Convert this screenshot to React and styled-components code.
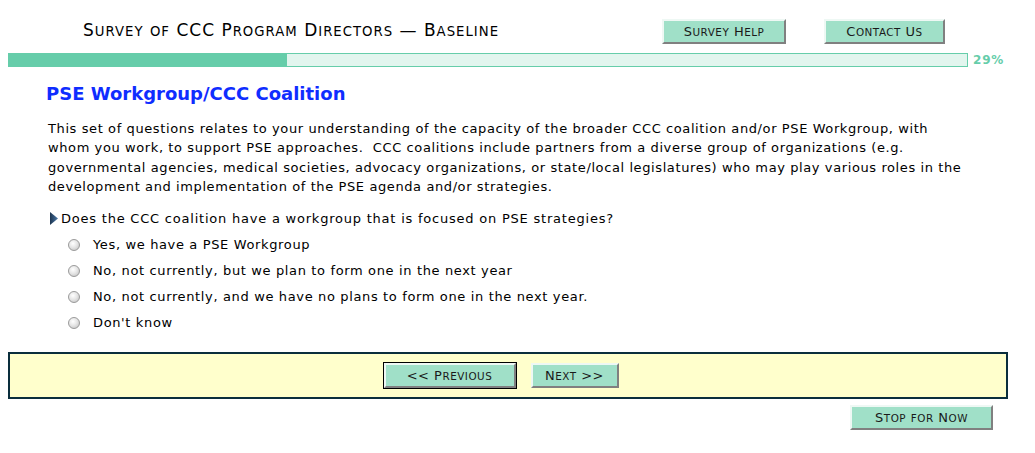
import React from "react";
import styled, { createGlobalStyle } from "styled-components";

const GlobalStyle = createGlobalStyle`
  body {
    margin: 8px;
    background: #fff;
    font-family: "DejaVu Sans", Verdana, sans-serif;
    color: #000;
  }
`;

const Page = styled.div`
  width: 1000px;
`;

const Header = styled.div`
  display: flex;
  align-items: center;
  height: 44px;
  padding-top: 1px;
  padding-left: 75px;
  padding-right: 63px;
`;

const Title = styled.h1`
  flex: 1;
  margin: -3px 0 0;
  font-size: 17px;
  font-weight: normal;
  letter-spacing: 1px;
  color: #000;
`;

const Lower = styled.span`
  font-size: ${(p) => p.$scale || 0.8}em;
  text-transform: uppercase;
`;

// fake the old-browser small caps: lowercase runs become smaller capitals
const SmallCaps = ({ text, scale }) =>
  text.split(/([a-z]+)/).map((part, i) =>
    /^[a-z]+$/.test(part) ? (
      <Lower key={i} $scale={scale}>
        {part}
      </Lower>
    ) : (
      <React.Fragment key={i}>{part}</React.Fragment>
    )
  );

const Button = styled.button`
  width: ${(p) => p.$w}px;
  height: 25px;
  padding: 0;
  margin-left: ${(p) => p.$gap || 0}px;
  background: #a0e0c8;
  font-family: "DejaVu Sans", Verdana, sans-serif;
  font-size: 13px;
  letter-spacing: 0.5px;
  color: #1a1a1a;
  border: 2px solid;
  border-color: #eef8f4 #808080 #808080 #eef8f4;
  outline: ${(p) => (p.$default ? "1px solid #000" : "none")};
  outline-offset: 0;
  cursor: pointer;
`;

const ProgressRow = styled.div`
  display: flex;
  align-items: center;
`;

const Track = styled.div`
  width: 958px;
  height: 12px;
  border: 1px solid #66cdaa;
  background: #e2f5ee;
`;

const Fill = styled.div`
  height: 100%;
  background: #66cdaa;
`;

const Percent = styled.span`
  margin-left: 5px;
  font-size: 12px;
  font-weight: bold;
  letter-spacing: 0.8px;
  color: #66cdaa;
`;

const Content = styled.div`
  padding-left: 38px;
`;

const Heading = styled.h2`
  margin: 16px 0 0;
  font-size: 18px;
  font-weight: bold;
  color: #0f2dff;
`;

const Intro = styled.p`
  margin: 15px 0 0 2px;
  width: 920px;
  font-size: 13px;
  letter-spacing: 0.6px;
  line-height: 19.3px;
`;

const Question = styled.div`
  display: flex;
  align-items: center;
  margin: 15px 0 0 4px;
  font-size: 13px;
  letter-spacing: 0.78px;
`;

const Arrow = styled.svg`
  width: 8px;
  height: 13px;
  margin-right: 3px;
`;

const Options = styled.div`
  display: flex;
  flex-direction: column;
  gap: 7px;
  margin: 9px 0 0 22px;
`;

const Option = styled.label`
  display: flex;
  align-items: center;
  height: 19px;
  font-size: 13px;
  letter-spacing: 0.64px;
`;

const Radio = styled.input`
  appearance: none;
  width: 12px;
  height: 12px;
  margin: 0 13px 0 0;
  border-radius: 50%;
  border: 1px solid #9a9a9a;
  background: radial-gradient(circle at 40% 35%, #ffffff 0%, #e6e6e6 45%, #bdbdbd 100%);
`;

const NavPanel = styled.div`
  display: flex;
  justify-content: center;
  align-items: center;
  gap: 15px;
  height: 43px;
  margin-top: 20px;
  padding-right: 14px;
  background: #ffffcc;
  border: 2px solid #0a2e3c;
`;

const Footer = styled.div`
  display: flex;
  justify-content: flex-end;
  padding-right: 15px;
  margin-top: 6px;
`;

const options = [
  "Yes, we have a PSE Workgroup",
  "No, not currently, but we plan to form one in the next year",
  "No, not currently, and we have no plans to form one in the next year.",
  "Don't know",
];

export default function App() {
  const progress = 29;
  return (
    <Page>
      <GlobalStyle />
      <Header>
        <Title>
          <SmallCaps text="Survey of CCC Program Directors — Baseline" scale={0.78} />
        </Title>
        <Button $w={124}>
          <SmallCaps text="Survey Help" />
        </Button>
        <Button $w={121} $gap={38}>
          <SmallCaps text="Contact Us" />
        </Button>
      </Header>
      <ProgressRow>
        <Track>
          <Fill style={{ width: `${progress}%` }} />
        </Track>
        <Percent>{progress}%</Percent>
      </ProgressRow>
      <Content>
        <Heading>PSE Workgroup/CCC Coalition</Heading>
        <Intro>
          This set of questions relates to your understanding of the capacity of the broader CCC
          coalition and/or PSE Workgroup, with whom you work, to support PSE approaches.&nbsp; CCC
          coalitions include partners from a diverse group of organizations (e.g. governmental
          agencies, medical societies, advocacy organizations, or state/local legislatures) who may
          play various roles in the development and implementation of the PSE agenda and/or
          strategies.
        </Intro>
        <Question>
          <Arrow viewBox="0 0 8 13">
            <defs>
              <linearGradient id="arw" x1="0" y1="0" x2="1" y2="0">
                <stop offset="0" stopColor="#1d3550" />
                <stop offset="1" stopColor="#4a78a8" />
              </linearGradient>
            </defs>
            <path d="M0 0 L8 6.5 L0 13 Z" fill="url(#arw)" />
          </Arrow>
          Does the CCC coalition have a workgroup that is focused on PSE strategies?
        </Question>
        <Options>
          {options.map((o) => (
            <Option key={o}>
              <Radio type="radio" name="pse" />
              {o}
            </Option>
          ))}
        </Options>
      </Content>
      <NavPanel>
        <Button $w={132} $default>
          <SmallCaps text="<< Previous" />
        </Button>
        <Button $w={88}>
          <SmallCaps text="Next >>" />
        </Button>
      </NavPanel>
      <Footer>
        <Button $w={143}>
          <SmallCaps text="Stop for Now" />
        </Button>
      </Footer>
    </Page>
  );
}
